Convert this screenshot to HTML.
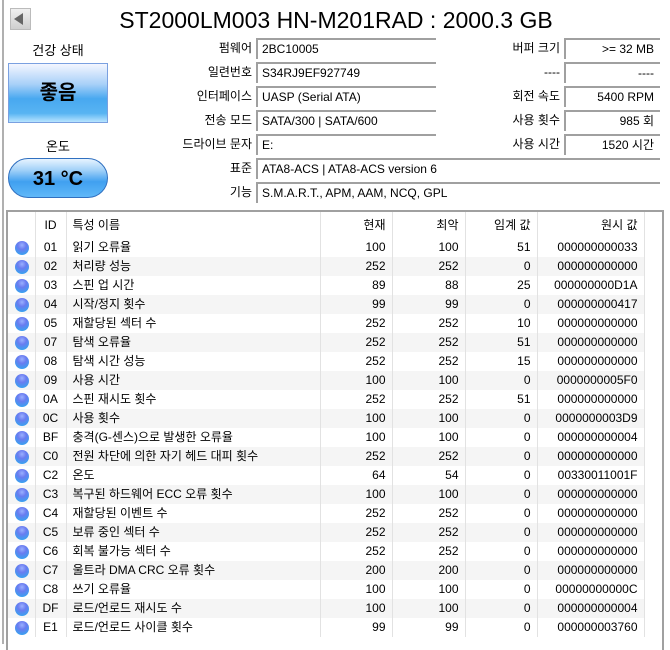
<!DOCTYPE html>
<html><head><meta charset="utf-8"><style>
*{margin:0;padding:0;box-sizing:border-box}
body{width:670px;height:644px;background:#fff;font-family:"Liberation Sans","Noto Sans CJK KR",sans-serif;font-size:12px;color:#000;position:relative;overflow:hidden}
.a{position:absolute;white-space:nowrap}
.lbl{position:absolute;text-align:right;line-height:22px}
.box{position:absolute;height:21px;border-top:2px solid #a0a0a0;border-left:2px solid #a0a0a0;line-height:19px;padding-left:4px;white-space:nowrap}
.r{text-align:right;padding-right:6px;padding-left:0}
table{position:absolute;left:8px;top:212px;border-collapse:collapse;table-layout:fixed}
td{height:19px;line-height:19px;white-space:nowrap;padding:0 6px;border-right:1px solid #e2e2e2;overflow:hidden;vertical-align:middle}
tr:nth-child(odd) td{background:#f5f5f5}
tr.h td{height:26px;background:#fff}
.n{text-align:right}
td.d{padding:0}
.dot{display:block;width:14px;height:14px;border-radius:50%;background:radial-gradient(circle at 50% 30%,#9ab0ff 0%,#6a7cf0 35%,#3aa0f0 80%,#5ec8ff 100%);margin-left:7px}
</style></head><body>
<div class="a" style="left:2px;top:0;width:2px;height:644px;background:#b0b0b0"></div>
<div class="a" style="left:10px;top:8px;width:21px;height:22px;background:linear-gradient(#f0f0f0,#cfcfcf);border:1px solid #bbb"></div>
<div class="a" style="left:14px;top:13px;width:0;height:0;border-top:6px solid transparent;border-bottom:6px solid transparent;border-right:9px solid #666"></div>
<div class="a" style="left:0;width:670px;top:4px;text-align:center;font-size:23px;line-height:32px;padding-left:2px">ST2000LM003 HN-M201RAD : 2000.3 GB</div>

<div class="a" style="left:8px;width:100px;top:40px;text-align:center;font-size:13px">건강 상태</div>
<div class="a" style="left:8px;top:63px;width:100px;height:60px;border:1px solid #7aa0e0;background:linear-gradient(#f4f6ff 0%,#a8d0f8 35%,#48a8f0 60%,#58b4f2 85%,#b8e4ff 100%);text-align:center;line-height:58px;font-size:20px;font-weight:bold">좋음</div>
<div class="a" style="left:8px;width:100px;top:136px;text-align:center;font-size:13px">온도</div>
<div class="a" style="left:8px;top:158px;width:100px;height:40px;border:1px solid #3070c0;border-radius:20px;background:linear-gradient(#e8f4ff 0%,#a0d0f8 30%,#40a0f0 60%,#60b8f8 100%);text-align:center;line-height:40px;font-size:20px;font-weight:bold">31 °C</div>

<div class="lbl" style="left:120px;width:132px;top:37px">펌웨어</div>
<div class="lbl" style="left:120px;width:132px;top:61px">일련번호</div>
<div class="lbl" style="left:120px;width:132px;top:85px">인터페이스</div>
<div class="lbl" style="left:120px;width:132px;top:109px">전송 모드</div>
<div class="lbl" style="left:120px;width:132px;top:133px">드라이브 문자</div>
<div class="lbl" style="left:120px;width:132px;top:157px">표준</div>
<div class="lbl" style="left:120px;width:132px;top:181px">기능</div>

<div class="box" style="left:256px;width:180px;top:38px">2BC10005</div>
<div class="box" style="left:256px;width:180px;top:62px">S34RJ9EF927749</div>
<div class="box" style="left:256px;width:180px;top:86px">UASP (Serial ATA)</div>
<div class="box" style="left:256px;width:180px;top:110px">SATA/300 | SATA/600</div>
<div class="box" style="left:256px;width:180px;top:134px">E:</div>
<div class="box" style="left:256px;width:404px;top:158px">ATA8-ACS | ATA8-ACS version 6</div>
<div class="box" style="left:256px;width:404px;top:182px">S.M.A.R.T., APM, AAM, NCQ, GPL</div>

<div class="lbl" style="left:440px;width:120px;top:37px">버퍼 크기</div>
<div class="lbl" style="left:440px;width:120px;top:61px">----</div>
<div class="lbl" style="left:440px;width:120px;top:85px">회전 속도</div>
<div class="lbl" style="left:440px;width:120px;top:109px">사용 횟수</div>
<div class="lbl" style="left:440px;width:120px;top:133px">사용 시간</div>
<div class="box r" style="left:564px;width:96px;top:38px">&gt;= 32 MB</div>
<div class="box r" style="left:564px;width:96px;top:62px">----</div>
<div class="box r" style="left:564px;width:96px;top:86px">5400 RPM</div>
<div class="box r" style="left:564px;width:96px;top:110px">985 회</div>
<div class="box r" style="left:564px;width:96px;top:134px">1520 시간</div>

<div class="a" style="left:6px;top:210px;width:658px;height:440px;border:2px solid #a0a0a0;border-bottom:none"></div>
<table>
<colgroup><col style="width:27px"><col style="width:31px"><col style="width:254px"><col style="width:72px"><col style="width:73px"><col style="width:72px"><col style="width:107px"><col style="width:18px"></colgroup>
<tr class="h"><td></td><td style="text-align:center;padding:0">ID</td><td>특성 이름</td><td class="n">현재</td><td class="n">최악</td><td class="n">임계 값</td><td class="n">원시 값</td><td style="border:none"></td></tr>
<tr><td class="d"><i class="dot"></i></td><td style="text-align:center;padding:0">01</td><td>읽기 오류율</td><td class="n">100</td><td class="n">100</td><td class="n">51</td><td class="n">000000000033</td><td style="border:none;background:#fff"></td></tr>
<tr><td class="d"><i class="dot"></i></td><td style="text-align:center;padding:0">02</td><td>처리량 성능</td><td class="n">252</td><td class="n">252</td><td class="n">0</td><td class="n">000000000000</td><td style="border:none;background:#fff"></td></tr>
<tr><td class="d"><i class="dot"></i></td><td style="text-align:center;padding:0">03</td><td>스핀 업 시간</td><td class="n">89</td><td class="n">88</td><td class="n">25</td><td class="n">000000000D1A</td><td style="border:none;background:#fff"></td></tr>
<tr><td class="d"><i class="dot"></i></td><td style="text-align:center;padding:0">04</td><td>시작/정지 횟수</td><td class="n">99</td><td class="n">99</td><td class="n">0</td><td class="n">000000000417</td><td style="border:none;background:#fff"></td></tr>
<tr><td class="d"><i class="dot"></i></td><td style="text-align:center;padding:0">05</td><td>재할당된 섹터 수</td><td class="n">252</td><td class="n">252</td><td class="n">10</td><td class="n">000000000000</td><td style="border:none;background:#fff"></td></tr>
<tr><td class="d"><i class="dot"></i></td><td style="text-align:center;padding:0">07</td><td>탐색 오류율</td><td class="n">252</td><td class="n">252</td><td class="n">51</td><td class="n">000000000000</td><td style="border:none;background:#fff"></td></tr>
<tr><td class="d"><i class="dot"></i></td><td style="text-align:center;padding:0">08</td><td>탐색 시간 성능</td><td class="n">252</td><td class="n">252</td><td class="n">15</td><td class="n">000000000000</td><td style="border:none;background:#fff"></td></tr>
<tr><td class="d"><i class="dot"></i></td><td style="text-align:center;padding:0">09</td><td>사용 시간</td><td class="n">100</td><td class="n">100</td><td class="n">0</td><td class="n">0000000005F0</td><td style="border:none;background:#fff"></td></tr>
<tr><td class="d"><i class="dot"></i></td><td style="text-align:center;padding:0">0A</td><td>스핀 재시도 횟수</td><td class="n">252</td><td class="n">252</td><td class="n">51</td><td class="n">000000000000</td><td style="border:none;background:#fff"></td></tr>
<tr><td class="d"><i class="dot"></i></td><td style="text-align:center;padding:0">0C</td><td>사용 횟수</td><td class="n">100</td><td class="n">100</td><td class="n">0</td><td class="n">0000000003D9</td><td style="border:none;background:#fff"></td></tr>
<tr><td class="d"><i class="dot"></i></td><td style="text-align:center;padding:0">BF</td><td>충격(G-센스)으로 발생한 오류율</td><td class="n">100</td><td class="n">100</td><td class="n">0</td><td class="n">000000000004</td><td style="border:none;background:#fff"></td></tr>
<tr><td class="d"><i class="dot"></i></td><td style="text-align:center;padding:0">C0</td><td>전원 차단에 의한 자기 헤드 대피 횟수</td><td class="n">252</td><td class="n">252</td><td class="n">0</td><td class="n">000000000000</td><td style="border:none;background:#fff"></td></tr>
<tr><td class="d"><i class="dot"></i></td><td style="text-align:center;padding:0">C2</td><td>온도</td><td class="n">64</td><td class="n">54</td><td class="n">0</td><td class="n">00330011001F</td><td style="border:none;background:#fff"></td></tr>
<tr><td class="d"><i class="dot"></i></td><td style="text-align:center;padding:0">C3</td><td>복구된 하드웨어 ECC 오류 횟수</td><td class="n">100</td><td class="n">100</td><td class="n">0</td><td class="n">000000000000</td><td style="border:none;background:#fff"></td></tr>
<tr><td class="d"><i class="dot"></i></td><td style="text-align:center;padding:0">C4</td><td>재할당된 이벤트 수</td><td class="n">252</td><td class="n">252</td><td class="n">0</td><td class="n">000000000000</td><td style="border:none;background:#fff"></td></tr>
<tr><td class="d"><i class="dot"></i></td><td style="text-align:center;padding:0">C5</td><td>보류 중인 섹터 수</td><td class="n">252</td><td class="n">252</td><td class="n">0</td><td class="n">000000000000</td><td style="border:none;background:#fff"></td></tr>
<tr><td class="d"><i class="dot"></i></td><td style="text-align:center;padding:0">C6</td><td>회복 불가능 섹터 수</td><td class="n">252</td><td class="n">252</td><td class="n">0</td><td class="n">000000000000</td><td style="border:none;background:#fff"></td></tr>
<tr><td class="d"><i class="dot"></i></td><td style="text-align:center;padding:0">C7</td><td>울트라 DMA CRC 오류 횟수</td><td class="n">200</td><td class="n">200</td><td class="n">0</td><td class="n">000000000000</td><td style="border:none;background:#fff"></td></tr>
<tr><td class="d"><i class="dot"></i></td><td style="text-align:center;padding:0">C8</td><td>쓰기 오류율</td><td class="n">100</td><td class="n">100</td><td class="n">0</td><td class="n">00000000000C</td><td style="border:none;background:#fff"></td></tr>
<tr><td class="d"><i class="dot"></i></td><td style="text-align:center;padding:0">DF</td><td>로드/언로드 재시도 수</td><td class="n">100</td><td class="n">100</td><td class="n">0</td><td class="n">000000000004</td><td style="border:none;background:#fff"></td></tr>
<tr><td class="d"><i class="dot"></i></td><td style="text-align:center;padding:0">E1</td><td>로드/언로드 사이클 횟수</td><td class="n">99</td><td class="n">99</td><td class="n">0</td><td class="n">000000003760</td><td style="border:none;background:#fff"></td></tr>
</table>
</body></html>
